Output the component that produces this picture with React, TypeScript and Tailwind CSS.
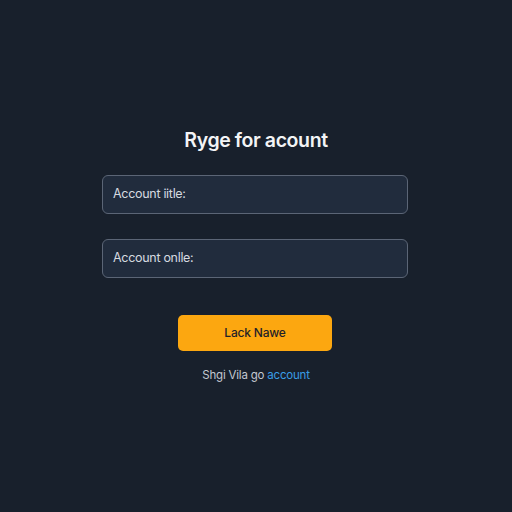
export default function App() {
  return (
    <div
      className="w-[512px] h-[512px] bg-[#18202c] flex flex-col items-center"
      style={{ fontFamily: 'Inter, "Liberation Sans", sans-serif' }}
    >
      <h1 className="mt-[127px] text-[19.5px] leading-[26px] font-semibold text-[#f3f4f6] tracking-[-0.4px]">
        Ryge for acount
      </h1>
      <div className="mt-[22px] ml-[-2px] w-[306px] flex flex-col gap-[25px]">
        <div className="h-[39px] rounded-[6px] border border-[#5b6576] bg-[#212c3d] flex items-center px-[10px] text-[12.5px] tracking-[-0.3px] text-[#d6dae0]">
          Account iitle:
        </div>
        <div className="h-[39px] rounded-[6px] border border-[#5b6576] bg-[#212c3d] flex items-center px-[10px] text-[12.5px] tracking-[-0.3px] text-[#d6dae0]">
          Account onlle:
        </div>
      </div>
      <button className="mt-[37px] ml-[-2px] w-[154px] h-[36px] rounded-[5px] bg-[#fca710] text-[12px] font-medium tracking-[-0.2px] text-[#1f2228]">
        Lack Nawe
      </button>
      <p className="mt-[16px] text-[11.5px] tracking-[-0.2px] text-[#c3c8d0]">
        Shgi Vila go <span className="text-[#3a9de6]">account</span>
      </p>
    </div>
  );
}
